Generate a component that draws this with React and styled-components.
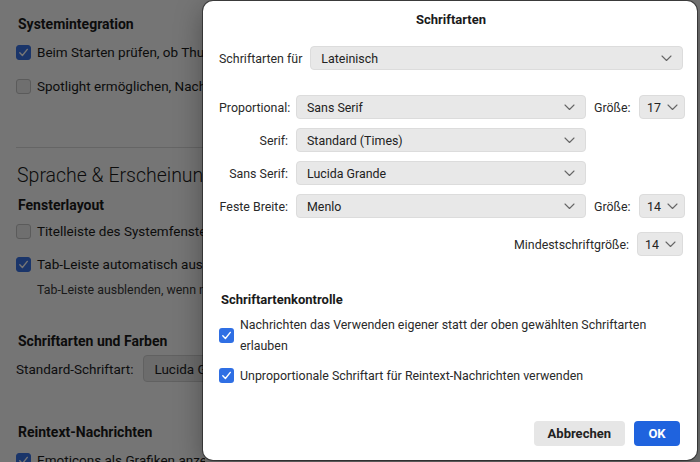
import React from "react";
import styled, { createGlobalStyle } from "styled-components";

const Global = createGlobalStyle`
  html, body { margin: 0; padding: 0; }
  body {
    width: 700px; height: 462px; overflow: hidden;
    font-family: Roboto, "Liberation Sans", Arial, sans-serif;
    color: #1d1d1f;
    -webkit-font-smoothing: antialiased;
  }
`;

const Stage = styled.div`
  position: relative;
  width: 700px;
  height: 462px;
  overflow: hidden;
  background: #fff;
`;

/* ---------- preferences page underneath (only its left strip shows) ---------- */

const Page = styled.div`
  display: flex;
  flex-direction: column;
  width: 189px;
  height: 448px;
  overflow: hidden;
  padding: 14px 0 0 16px;
`;

const SectionTitle = styled.h3`
  margin: ${(p) => p.$mt || 0}px 0 0 2px;
  font-size: 14px;
  font-weight: 700;
  line-height: 20px;
  color: #1b1b1b;
  white-space: nowrap;
`;

const BigTitle = styled.h2`
  margin: ${(p) => p.$mt || 0}px 0 0 1px;
  font-size: 19.5px;
  font-weight: 300;
  line-height: 24px;
  color: #1b1b1b;
  white-space: nowrap;
`;

const Row = styled.label`
  display: flex;
  align-items: center;
  gap: 6px;
  height: 20px;
  flex: none;
  margin-top: ${(p) => p.$mt || 0}px;
  font-size: 13.5px;
  white-space: nowrap;
  color: #1b1b1b;
`;

const PageBox = styled.span`
  flex: none;
  width: 15px;
  height: 15px;
  box-sizing: border-box;
  border-radius: 3px;
  display: flex;
  align-items: center;
  justify-content: center;
  background: ${(p) => (p.$on ? "#3a73e6" : "#f1f1f1")};
  border: 1px solid ${(p) => (p.$on ? "#3a73e6" : "#c6c6c6")};
`;

const Hint = styled.div`
  margin: ${(p) => p.$mt || 0}px 0 0 21px;
  font-size: 12.4px;
  line-height: 18px;
  white-space: nowrap;
  color: #3a3a3a;
`;

const Rule = styled.div`
  flex: none;
  margin-top: ${(p) => p.$mt || 0}px;
  height: 1px;
  width: 200px;
  background: #dcdcdc;
`;

const FieldRow = styled.div`
  display: flex;
  align-items: center;
  gap: 10px;
  flex: none;
  margin-top: ${(p) => p.$mt || 0}px;
  font-size: 13.5px;
  white-space: nowrap;
`;

const PageSelect = styled.div`
  flex: none;
  height: 27px;
  width: 200px;
  box-sizing: border-box;
  border: 1px solid #d4d4d4;
  border-radius: 4px;
  background: #ececec;
  display: flex;
  align-items: center;
  padding-left: 10px;
`;

const Scrim = styled.div`
  position: absolute;
  inset: 0;
  background: rgba(0, 0, 0, 0.54);
`;

/* ---------- font dialog ---------- */

const Dialog = styled.div`
  position: absolute;
  left: 203px;
  top: 1px;
  width: 494px;
  height: 459px;
  box-sizing: border-box;
  background: #fff;
  border-radius: 10px;
  box-shadow: 0 0 0 1px rgba(0, 0, 0, 0.45), 0 8px 28px rgba(0, 0, 0, 0.35);
  display: flex;
  flex-direction: column;
  padding: 10px 14px 14px 16px;
  font-size: 12.4px;
  color: #222;
`;

const DialogTitle = styled.div`
  text-align: center;
  font-weight: 700;
  font-size: 13px;
  line-height: 18px;
  color: #1a1a1a;
`;

const LangRow = styled.div`
  display: flex;
  align-items: center;
  gap: 8px;
  margin-top: 17px;
`;

const Label = styled.span`
  white-space: nowrap;
  color: #2a2a2a;
  text-align: ${(p) => (p.$right ? "right" : "left")};
`;

const Select = styled.div`
  height: 24px;
  box-sizing: border-box;
  border: 1px solid #dcdcdc;
  border-radius: 4px;
  background: #e8e8e8;
  display: flex;
  align-items: center;
  justify-content: space-between;
  padding: ${(p) => (p.$small ? "0 7px 0 7px" : "0 10px 0 10px")};
  gap: 6px;
  width: ${(p) => (p.$w ? `${p.$w}px` : "auto")};
  flex: ${(p) => (p.$grow ? 1 : "none")};
  color: #222;
  white-space: nowrap;
  & > svg { flex: none; }
`;

const FontGrid = styled.div`
  display: grid;
  grid-template-columns: 69px 290px 37px 46px;
  column-gap: 8px;
  row-gap: 9px;
  align-items: center;
  margin-top: 25px;
`;

const MinRow = styled.div`
  display: flex;
  justify-content: flex-end;
  align-items: center;
  gap: 8px;
  margin-top: 14px;
`;

const ControlTitle = styled.div`
  margin: 35px 0 0 2px;
  font-weight: 700;
  font-size: 13px;
  line-height: 18px;
  color: #1a1a1a;
`;

const CheckRow = styled.div`
  display: flex;
  align-items: center;
  gap: 6px;
  margin-top: ${(p) => p.$mt || 0}px;
  line-height: 21px;
  color: #2a2a2a;
`;

const Tick = styled.span`
  flex: none;
  width: 15px;
  height: 15px;
  border-radius: 3px;
  background: #2f6fe4;
  display: flex;
  align-items: center;
  justify-content: center;
`;

const Footer = styled.div`
  margin-top: auto;
  display: flex;
  justify-content: flex-end;
  gap: 9px;
  padding-right: 3px;
`;

const Button = styled.button`
  height: 25px;
  box-sizing: border-box;
  border: none;
  border-radius: 4px;
  padding: 0 14px;
  font-family: inherit;
  font-size: 13px;
  font-weight: 700;
  background: ${(p) => (p.$primary ? "#1f63de" : "#e6e6e6")};
  color: ${(p) => (p.$primary ? "#fff" : "#222")};
  min-width: ${(p) => (p.$primary ? 46 : 91)}px;
`;

const Chevron = () => (
  <svg width="11" height="7" viewBox="0 0 11 7" fill="none">
    <path d="M1 1l4.5 4.5L10 1" stroke="#666" strokeWidth="1.1" strokeLinecap="round" strokeLinejoin="round" />
  </svg>
);

const Check = ({ size = 11 }) => (
  <svg width={size} height={size} viewBox="0 0 11 11" fill="none">
    <path d="M1.8 5.8l2.6 2.7L9.3 2.4" stroke="#fff" strokeWidth="1.4" strokeLinecap="round" strokeLinejoin="round" />
  </svg>
);

const PageCheck = ({ on, children, mt }) => (
  <Row $mt={mt}>
    <PageBox $on={on}>{on && <Check size={11} />}</PageBox>
    {children}
  </Row>
);

export default function App() {
  return (
    <Stage>
      <Global />
      <Page>
        <SectionTitle>Systemintegration</SectionTitle>
        <PageCheck on mt={8}>Beim Starten prüfen, ob Thunderbird</PageCheck>
        <PageCheck mt={14}>Spotlight ermöglichen, Nachrichten</PageCheck>
        <Rule $mt={51} />
        <BigTitle $mt={16}>Sprache &amp; Erscheinung</BigTitle>
        <SectionTitle $mt={7}>Fensterlayout</SectionTitle>
        <PageCheck mt={6}>Titelleiste des Systemfensters</PageCheck>
        <PageCheck on mt={13}>Tab-Leiste automatisch ausblenden</PageCheck>
        <Hint $mt={7}>Tab-Leiste ausblenden, wenn nur ein Tab</Hint>
        <SectionTitle $mt={32}>Schriftarten und Farben</SectionTitle>
        <FieldRow $mt={4}>
          <span>Standard-Schriftart:</span>
          <PageSelect>Lucida Grande</PageSelect>
        </FieldRow>
        <SectionTitle $mt={40}>Reintext-Nachrichten</SectionTitle>
        <PageCheck on mt={8}>Emoticons als Grafiken anzeigen</PageCheck>
      </Page>
      <Scrim />

      <Dialog>
        <DialogTitle>Schriftarten</DialogTitle>

        <LangRow>
          <Label>Schriftarten für</Label>
          <Select $grow>
            <span>Lateinisch</span>
            <Chevron />
          </Select>
        </LangRow>

        <FontGrid>
          <Label $right>Proportional:</Label>
          <Select>
            <span>Sans Serif</span>
            <Chevron />
          </Select>
          <Label>Größe:</Label>
          <Select $small>
            <span>17</span>
            <Chevron />
          </Select>

          <Label $right>Serif:</Label>
          <Select>
            <span>Standard (Times)</span>
            <Chevron />
          </Select>
          <span />
          <span />

          <Label $right>Sans Serif:</Label>
          <Select>
            <span>Lucida Grande</span>
            <Chevron />
          </Select>
          <span />
          <span />

          <Label $right>Feste Breite:</Label>
          <Select>
            <span>Menlo</span>
            <Chevron />
          </Select>
          <Label>Größe:</Label>
          <Select $small>
            <span>14</span>
            <Chevron />
          </Select>
        </FontGrid>

        <MinRow>
          <Label>Mindestschriftgröße:</Label>
          <Select $small $w={46}>
            <span>14</span>
            <Chevron />
          </Select>
        </MinRow>

        <ControlTitle>Schriftartenkontrolle</ControlTitle>
        <CheckRow $mt={5}>
          <Tick><Check /></Tick>
          <span>
            Nachrichten das Verwenden eigener statt der oben gewählten Schriftarten
            <br />
            erlauben
          </span>
        </CheckRow>
        <CheckRow $mt={9}>
          <Tick><Check /></Tick>
          <span>Unproportionale Schriftart für Reintext-Nachrichten verwenden</span>
        </CheckRow>

        <Footer>
          <Button>Abbrechen</Button>
          <Button $primary>OK</Button>
        </Footer>
      </Dialog>
    </Stage>
  );
}
